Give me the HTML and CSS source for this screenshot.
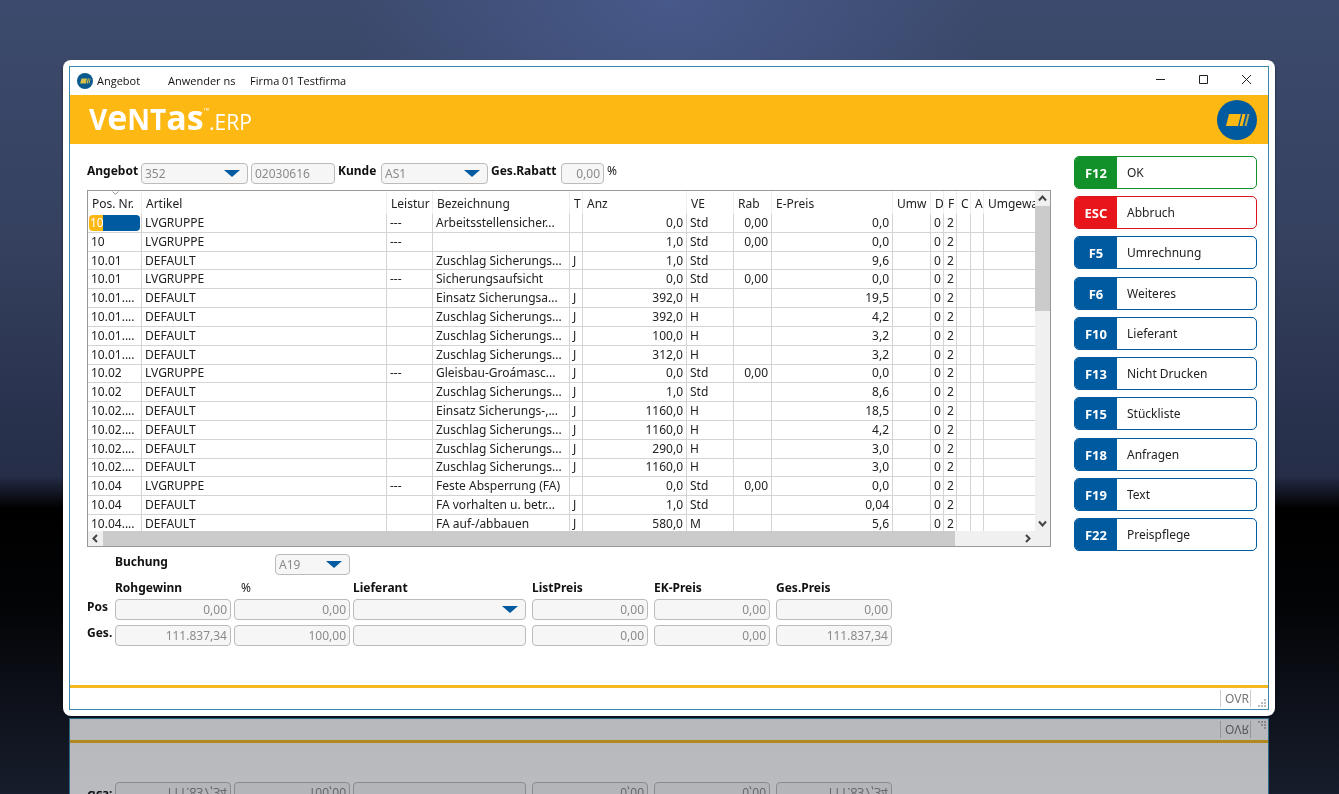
FILE: index.html
```
<!DOCTYPE html>
<html lang="de">
<head>
  <meta charset="UTF-8">
  <meta name="viewport" content="width=device-width, initial-scale=1.0">
  <title>Angebot</title>
  <link rel="stylesheet" href="styles.css">
</head>
<body>
  <div class="frame">
    <div class="window">
      <div class="titlebar">
        <svg class="app-icon" viewBox="0 0 40 40">
          <circle cx="20" cy="20" r="20" fill="#0b5a8f"/>
          <path d="M11 14h14l-3 12H8zM27 14h3l-3 12h-3zM32 14h2l-3 12h-2z" fill="#d8c04a"/>
        </svg>
        <span class="title">Angebot</span>
        <span class="user">Anwender ns</span>
        <span>Firma 01 Testfirma</span>
        <div class="win-buttons">
          <button type="button" aria-label="Minimieren"><svg viewBox="0 0 11 11"><path d="M1 5.500h9"/></svg></button>
          <button type="button" aria-label="Maximieren"><svg viewBox="0 0 11 11"><path d="M1.500 1.500h8v8h-8z"/></svg></button>
          <button type="button" aria-label="Schließen"><svg viewBox="0 0 11 11"><path d="M1 1l9 9M10 1l-9 9"/></svg></button>
        </div>
      </div>

      <header class="banner">
        <div class="logo"><b>V<i>e</i>NT<i>as</i></b><sup>™</sup><span>.ERP</span></div>
        <svg class="brand" viewBox="0 0 40 40">
          <circle cx="20" cy="20" r="20" fill="#005a9f"/>
          <path d="M12 14h12l-3 12H9z" fill="#fdb913"/>
          <path d="M25.500 14h3l-3 12h-3z" fill="#fdb913"/>
          <path d="M30.500 14h2l-3 12h-2z" fill="#b9a94a"/>
        </svg>
      </header>

      <main>
        <div class="content">
          <form class="head-form">
            <label for="angebot">Angebot</label>
            <select id="angebot"><option>352</option></select>
            <input type="text" value="02030616" aria-label="Angebotsdatum">
            <label for="kunde">Kunde</label>
            <select id="kunde"><option>AS1</option></select>
            <label for="rabatt">Ges.Rabatt</label>
            <input class="num" type="text" id="rabatt" value="0,00">
            <span>%</span>
          </form>

          <div class="grid">
            <div class="grid-view">
              <table>
                <colgroup>
                  <col class="c-pos"><col class="c-art"><col class="c-leist"><col class="c-bez"><col class="c-flag">
                  <col class="c-anz"><col class="c-ve"><col class="c-rab"><col class="c-preis"><col class="c-umw">
                  <col class="c-flag"><col class="c-flag"><col class="c-flag2"><col class="c-flag"><col>
                </colgroup>
                <thead>
                  <tr id="columns"></tr>
                </thead>
                <tbody id="rows"></tbody>
              </table>
            </div>
            <div class="vscroll">
              <button type="button" aria-label="Nach oben"><svg viewBox="0 0 9 9"><path d="M1 6.500l3.500-4 3.500 4"/></svg></button>
              <div class="thumb"></div>
              <button type="button" aria-label="Nach unten"><svg viewBox="0 0 9 9"><path d="M1 2.500l3.500 4 3.500-4"/></svg></button>
            </div>
            <div class="hscroll">
              <button type="button" aria-label="Nach links"><svg viewBox="0 0 9 9"><path d="M6 1l-3.500 3.500 3.500 3.500"/></svg></button>
              <div class="thumb"></div>
              <button type="button" aria-label="Nach rechts"><svg viewBox="0 0 9 9"><path d="M3 1l3.500 3.500-3.500 3.500"/></svg></button>
            </div>
          </div>

          <form class="sums">
            <label class="buchung" for="buchung">Buchung</label>
            <select class="konto" id="buchung"><option>A19</option></select>

            <b class="first">Rohgewinn</b>
            <span class="percent">%</span>
            <b>Lieferant</b>
            <b class="price">ListPreis</b>
            <b class="price">EK-Preis</b>
            <b class="price">Ges.Preis</b>

            <label for="pos">Pos</label>
            <input class="num" type="text" id="pos" value="0,00">
            <input class="num" type="text" value="0,00" aria-label="Pos Prozent">
            <select aria-label="Pos Lieferant"><option></option></select>
            <input class="num price" type="text" value="0,00" aria-label="Pos ListPreis">
            <input class="num price" type="text" value="0,00" aria-label="Pos EK-Preis">
            <input class="num price" type="text" value="0,00" aria-label="Pos Ges.Preis">

            <label for="ges">Ges.</label>
            <input class="num" type="text" id="ges" value="111.837,34">
            <input class="num" type="text" value="100,00" aria-label="Ges. Prozent">
            <input type="text" aria-label="Ges. Lieferant">
            <input class="num price" type="text" value="0,00" aria-label="Ges. ListPreis">
            <input class="num price" type="text" value="0,00" aria-label="Ges. EK-Preis">
            <input class="num price" type="text" value="111.837,34" aria-label="Ges. Ges.Preis">
          </form>
        </div>

        <aside class="keys">
          <button type="button" class="key ok"><b>F12</b><span>OK</span></button>
          <button type="button" class="key cancel"><b>ESC</b><span>Abbruch</span></button>
          <button type="button" class="key"><b>F5</b><span>Umrechnung</span></button>
          <button type="button" class="key"><b>F6</b><span>Weiteres</span></button>
          <button type="button" class="key"><b>F10</b><span>Lieferant</span></button>
          <button type="button" class="key"><b>F13</b><span>Nicht Drucken</span></button>
          <button type="button" class="key"><b>F15</b><span>Stückliste</span></button>
          <button type="button" class="key"><b>F18</b><span>Anfragen</span></button>
          <button type="button" class="key"><b>F19</b><span>Text</span></button>
          <button type="button" class="key"><b>F22</b><span>Preispflege</span></button>
        </aside>
      </main>

      <footer class="status">
        <span>OVR</span>
        <svg class="grip" viewBox="0 0 9 9">
          <path d="M7 1h2v2H7zM7 4h2v2H7zM7 7h2v2H7zM4 4h2v2H4zM4 7h2v2H4zM1 7h2v2H1z"/>
        </svg>
      </footer>
    </div>
  </div>

  <script>
    const columns = ['Pos. Nr.', 'Artikel', 'Leistur', 'Bezeichnung', 'T', 'Anz', 'VE', 'Rab', 'E-Preis', 'Umw', 'D', 'F', 'C', 'A', 'Umgewa']
    const numeric = [5, 7, 8]

    // Pos, Artikel, Leistung, Bezeichnung, T, Anz, VE, Rab, E-Preis
    const rows = [
      ['10', 'LVGRUPPE', '---', 'Arbeitsstellensicher...', '', '0,0', 'Std', '0,00', '0,0'],
      ['10', 'LVGRUPPE', '---', '', '', '1,0', 'Std', '0,00', '0,0'],
      ['10.01', 'DEFAULT', '', 'Zuschlag Sicherungs...', 'J', '1,0', 'Std', '', '9,6'],
      ['10.01', 'LVGRUPPE', '---', 'Sicherungsaufsicht', '', '0,0', 'Std', '0,00', '0,0'],
      ['10.01....', 'DEFAULT', '', 'Einsatz Sicherungsa...', 'J', '392,0', 'H', '', '19,5'],
      ['10.01....', 'DEFAULT', '', 'Zuschlag Sicherungs...', 'J', '392,0', 'H', '', '4,2'],
      ['10.01....', 'DEFAULT', '', 'Zuschlag Sicherungs...', 'J', '100,0', 'H', '', '3,2'],
      ['10.01....', 'DEFAULT', '', 'Zuschlag Sicherungs...', 'J', '312,0', 'H', '', '3,2'],
      ['10.02', 'LVGRUPPE', '---', 'Gleisbau-Groámasc...', 'J', '0,0', 'Std', '0,00', '0,0'],
      ['10.02', 'DEFAULT', '', 'Zuschlag Sicherungs...', 'J', '1,0', 'Std', '', '8,6'],
      ['10.02....', 'DEFAULT', '', 'Einsatz Sicherungs-,...', 'J', '1160,0', 'H', '', '18,5'],
      ['10.02....', 'DEFAULT', '', 'Zuschlag Sicherungs...', 'J', '1160,0', 'H', '', '4,2'],
      ['10.02....', 'DEFAULT', '', 'Zuschlag Sicherungs...', 'J', '290,0', 'H', '', '3,0'],
      ['10.02....', 'DEFAULT', '', 'Zuschlag Sicherungs...', 'J', '1160,0', 'H', '', '3,0'],
      ['10.04', 'LVGRUPPE', '---', 'Feste Absperrung (FA)', '', '0,0', 'Std', '0,00', '0,0'],
      ['10.04', 'DEFAULT', '', 'FA vorhalten u. betr...', 'J', '1,0', 'Std', '', '0,04'],
      ['10.04....', 'DEFAULT', '', 'FA auf-/abbauen', 'J', '580,0', 'M', '', '5,6']
    ]

    document.getElementById('columns').innerHTML = columns.map((name, i) => {
      const sort = i === 0 ? '<svg class="sort" viewBox="0 0 7 4"><path d="M.5 .5l3 3 3-3"/></svg>' : ''
      return `<th>${sort}${name}</th>`
    }).join('')

    document.getElementById('rows').innerHTML = rows.map((row, r) => {
      const cells = [...row, '', '0', '2', '', '', '']
      return '<tr>' + cells.map((text, i) => {
        if (r === 0 && i === 0) {
          return `<td class="active"><input type="text" value="${text}" aria-label="Pos. Nr."></td>`
        }
        return `<td${numeric.includes(i) ? ' class="num"' : ''}>${text}</td>`
      }).join('') + '</tr>'
    }).join('')
  </script>
</body>
</html>
```
FILE: styles.css
```
* {
  box-sizing: border-box;
}

body {
  margin: 0;
  padding: 60px 64px 78px 63px;
  min-height: 100vh;
  overflow: hidden;
  font: 12px/16px "Noto Sans", "Open Sans", sans-serif;
  color: #222;
  background:
    radial-gradient(ellipse 24% 26% at 50% 0, #47598a, transparent),
    linear-gradient(#3c4a6d, #35415f 30%, #252d47 60%, #000 64%, #030406 76%, #171d2c);
}

input,
select,
button {
  font: inherit;
  color: inherit;
}

.frame {
  padding: 6px;
  background: #fff;
  border-radius: 8px;
  box-shadow: 0 2px 2px #0b1420;
}

/* the glass floor under the window mirrors it */
.window {
  border: 1px solid #3a86ac;
  background: #fff;
  -webkit-box-reflect: below 8px linear-gradient(rgba(0, 0, 0, .7), rgba(0, 0, 0, .7));
}

.titlebar {
  display: flex;
  align-items: center;
  height: 28px;
  padding-left: 7px;
  font-family: "Open Sans", "Noto Sans", sans-serif;
  font-size: 11px;
  color: #111;
}
.app-icon {
  width: 16px;
  height: 16px;
  margin-right: 4px;
}
.title {
  width: 71px;
}
.user {
  width: 82px;
}
.win-buttons {
  display: flex;
  margin-left: auto;
}
.win-buttons button {
  width: 43px;
  height: 28px;
  padding: 0;
  border: 0;
  background: none;
}
.win-buttons svg {
  width: 11px;
  height: 11px;
  fill: none;
  stroke: #222;
}

.banner {
  display: flex;
  align-items: center;
  justify-content: space-between;
  height: 49px;
  padding: 0 11px 0 19px;
  background: #fdb813;
}
.logo {
  display: flex;
  align-items: baseline;
  color: #fff;
  font-family: "Open Sans", "Noto Sans", sans-serif;
  font-size: 21px;
  line-height: 34px;
}
.logo b {
  font-size: 28px;
}
.logo i {
  font-style: normal;
  font-size: 34px;
}
.logo sup {
  align-self: flex-start;
  font-size: 7px;
  line-height: 22px;
}
.brand {
  width: 40px;
  height: 40px;
}

main {
  display: flex;
  gap: 23px;
  min-height: 541px;
  padding: 12px 11px 0 17px;
}
.content {
  flex: 1;
  min-width: 0;
  padding-top: 7px;
}

label,
.sums b {
  font-weight: bold;
  color: #111;
}
.head-form {
  display: grid;
  grid-template-columns: 51px 107px 84px 40px 107px 67px 43px auto;
  column-gap: 3px;
}
.content form input,
.content form select {
  width: 100%;
  min-width: 0;
  height: 21px;
  padding: 0 3px;
  border: 1px solid #bbb;
  border-radius: 4px;
  background-color: #f6f6f6;
  color: #8a8a8a;
}
.content form select {
  appearance: none;
  background-image: url("data:image/svg+xml,%3Csvg xmlns='http://www.w3.org/2000/svg' viewBox='0 0 16 7'%3E%3Cpath d='M0 0h16l-8 7z' fill='%23005a9f'/%3E%3C/svg%3E");
  background-repeat: no-repeat;
  background-position: right 7px center;
  background-size: 16px 7px;
}
.content form .num,
td.num {
  text-align: right;
}

.grid {
  display: grid;
  grid-template-columns: 1fr 15px;
  grid-template-rows: 340px 15px;
  margin: 6px 0 7px;
  border: 1px solid #999;
  background: #fff;
}
.grid-view {
  overflow: hidden;
}
table {
  width: 100%;
  height: 343px;
  table-layout: fixed;
  border-collapse: separate;
  border-spacing: 0;
}
.c-pos { width: 54px; }
.c-art { width: 245px; }
.c-leist { width: 46px; }
.c-bez { width: 137px; }
.c-flag { width: 13px; }
.c-flag2 { width: 14px; }
.c-anz { width: 104px; }
.c-ve { width: 47px; }
.c-rab { width: 38px; }
.c-preis { width: 121px; }
.c-umw { width: 38px; }

th,
td {
  overflow: hidden;
  white-space: nowrap;
  border-right: 1px solid #d4d4d4;
}
th:last-child,
td:last-child {
  border-right: 0;
}
th {
  position: relative;
  height: 23px;
  padding: 2px 0 0 4px;
  border-right-color: #eee;
  font-weight: normal;
  text-align: left;
}
.sort {
  position: absolute;
  top: 0;
  left: 24px;
  width: 7px;
  height: 4px;
  fill: none;
  stroke: #999;
}
td {
  padding: 0 3px;
  border-bottom: 1px solid #d4d4d4;
}
td.active {
  padding: 0 1px;
}
td.active input {
  display: block;
  width: 51px;
  height: 16px;
  padding: 0 1px;
  border: 0;
  border-radius: 4px;
  background: linear-gradient(90deg, #fdb813 14px, #005a9f 14px);
  color: #fff;
}

.vscroll,
.hscroll {
  display: flex;
  background: #f0f0f0;
}
.vscroll {
  flex-direction: column;
}
.hscroll {
  grid-column: 1 / 3;
  padding-right: 15px;
}
.vscroll button,
.hscroll button {
  display: flex;
  align-items: center;
  justify-content: center;
  width: 15px;
  height: 15px;
  padding: 0;
  border: 0;
  background: none;
}
.vscroll svg,
.hscroll svg {
  width: 9px;
  height: 9px;
  fill: none;
  stroke: #444;
  stroke-width: 2;
}
.thumb {
  background: #cbcbcb;
}
.vscroll .thumb {
  height: 105px;
  margin-bottom: auto;
}
.hscroll .thumb {
  width: 90%;
  margin-right: auto;
}

.sums {
  display: grid;
  grid-template-columns: 25px 116px 116px 173px 119px 119px 119px;
  grid-template-rows: 21px 14px 21px 21px;
  gap: 5px 3px;
}
.buchung,
.first {
  grid-column: 2;
}
.content form .konto {
  grid-column: 3;
  justify-self: end;
  width: 75px;
}
.sums .percent {
  padding-left: 7px;
}
.sums .price {
  margin-left: 3px;
}
.sums input.price {
  width: 116px;
}

.keys {
  display: flex;
  flex-direction: column;
  justify-content: space-between;
  width: 183px;
  height: 395px;
}
.key {
  display: flex;
  height: 33px;
  padding: 0;
  overflow: hidden;
  border: 1px solid #005a9f;
  border-radius: 5px;
  background: #fff;
  line-height: 32px;
}
.key b {
  width: 42px;
  background: #005a9f;
  color: #fff;
  font-size: 13px;
}
.key span {
  padding-left: 10px;
}
.key.ok {
  border-color: #12912a;
}
.key.ok b {
  background: #12912a;
}
.key.cancel {
  border-color: #d8161c;
}
.key.cancel b {
  background: #e8161a;
}

.status {
  display: flex;
  align-items: flex-end;
  justify-content: flex-end;
  height: 24px;
  padding: 0 2px 2px 0;
  border-top: 3px solid #f5b81e;
  color: #777;
}
.status span {
  padding: 0 1px 0 4px;
  border: solid #ccc;
  border-width: 0 1px;
  line-height: 17px;
}
.grip {
  width: 9px;
  height: 9px;
  margin-left: 6px;
  fill: #bbb;
}
```
